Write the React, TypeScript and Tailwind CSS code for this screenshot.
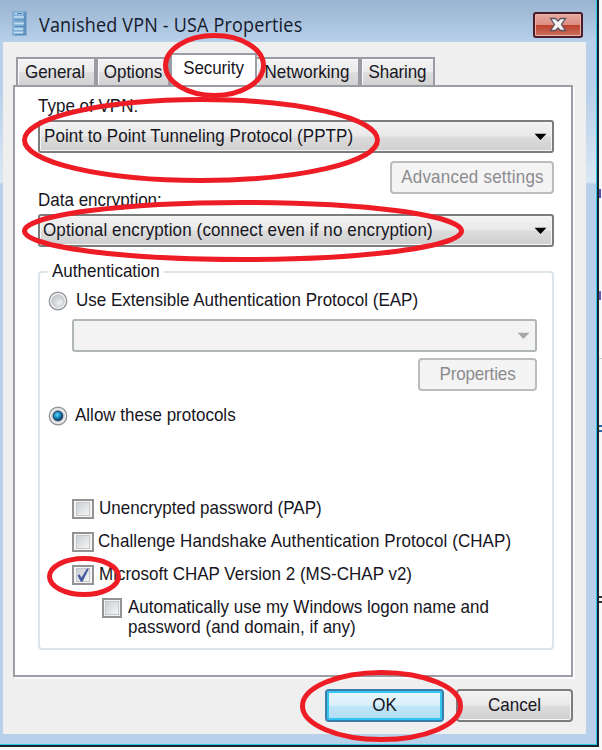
import React from 'react';

// Tall, narrow lettering used by every control in the dialog.
function Label({ children, className = '' }: { children: React.ReactNode; className?: string }) {
  return <span className={`inline-block origin-[50%_80%] scale-y-[1.08] whitespace-nowrap ${className}`}>{children}</span>;
}

function Combo({ text, className = '', disabled = false }: { text?: string; className?: string; disabled?: boolean }) {
  const tone = disabled
    ? 'border-[#b1b6b9] bg-[#f3f3f3]'
    : 'border-[#7c7c7c] bg-[linear-gradient(to_bottom,#f2f2f2_0%,#e9e9e9_48%,#dcdcdc_52%,#cfcfcf_100%)] shadow-[inset_0_0_0_1px_#f6f6f6]';
  return (
    <div className={`flex items-center justify-between rounded-[3px] border-2 pr-[5px] whitespace-nowrap ${tone} ${className}`}>
      <Label className="pt-px">{text}</Label>
      <svg width="13" height="8" viewBox="0 0 13 8" className={disabled ? 'fill-[#a4a7aa]' : 'fill-black'}>
        <path d="M0.5 0.7h12L6.5 7z" />
      </svg>
    </div>
  );
}

function Button({ text, className }: { text: string; className: string }) {
  return (
    <button className={`flex shrink-0 items-center justify-center rounded-[4px] border-2 pt-px whitespace-nowrap ${className}`}>
      <Label>{text}</Label>
    </button>
  );
}

const DISABLED = 'border-[#b9bdc0] bg-[#f4f4f4] text-[#8b8b8f]';

function Radio({ checked = false }: { checked?: boolean }) {
  return (
    <svg width="20" height="20" viewBox="0 0 20 20" className="shrink-0">
      <defs>
        <radialGradient id="well" cx=".62" cy=".65" r=".7">
          <stop offset="0" stopColor="#f0f0f0" />
          <stop offset="1" stopColor="#bcc2c8" />
        </radialGradient>
        <radialGradient id="dot" cx=".42" cy=".38" r=".6">
          <stop offset="0" stopColor="#63d0f5" />
          <stop offset=".55" stopColor="#1788bd" />
          <stop offset="1" stopColor="#0b2f55" />
        </radialGradient>
      </defs>
      <circle cx="10" cy="10" r="8.700" fill="#f6f6f6" stroke="#92969a" strokeWidth="1.400" />
      <circle cx="10" cy="10" r="6.300" fill="url(#well)" stroke="#c3c8cc" strokeWidth=".8" />
      {checked && <circle cx="10" cy="10" r="4.800" fill="url(#dot)" stroke="#173a5d" strokeWidth=".9" />}
    </svg>
  );
}

function Check({ checked = false, className = 'w-[22px]' }: { checked?: boolean; className?: string }) {
  return (
    <span className={`flex h-[20px] shrink-0 items-center justify-center border-2 border-[#939393] bg-[#f4f4f4] ${className}`}>
      <span className="flex size-[14px] items-center justify-center border border-[#c4c8cc] bg-linear-to-br from-[#cbd0d5] to-[#f5f5f5]">
        {checked && (
          <svg width="14" height="15" viewBox="0 0 14 15" className="shrink-0">
            <path d="M1.500 7.500l2-1.200 2 3.200L10.800 .8l2.200-.3L6.500 13.800H4.800z" fill="#465c9e" />
          </svg>
        )}
      </span>
    </span>
  );
}

function Tab({ text, className }: { text: string; className: string }) {
  return (
    <div className={`flex h-[28px] justify-center border-2 border-b-0 border-[#999ca3] bg-[linear-gradient(to_bottom,#f3f3f3_0%,#ebebeb_48%,#dedede_52%,#d2d2d2_100%)] pt-[4px] leading-[20px] whitespace-nowrap shadow-[inset_1px_1px_0_#fafafa] ${className}`}>
      <Label>{text}</Label>
    </div>
  );
}

function Annotations() {
  return (
    <svg width="602" height="750" className="pointer-events-none absolute inset-0 fill-none stroke-[#ee1c25] stroke-[5]">
      <ellipse cx="214.500" cy="65.500" rx="49" ry="30" />
      <ellipse cx="201" cy="140" rx="176.500" ry="40.500" />
      <ellipse cx="243" cy="231" rx="218.500" ry="28.500" />
      <ellipse cx="84" cy="576.500" rx="34.500" ry="18" />
      <ellipse cx="381.500" cy="706" rx="79" ry="33.500" />
    </svg>
  );
}

export default function App() {
  return (
    <div className="relative flex h-[750px] w-[602px] overflow-hidden bg-[#f8f8f8] font-['Liberation_Sans',Arial,sans-serif] text-[17px] leading-[20px] text-[#171522]">
      <div className="flex h-[747px] w-[599px] shrink-0 flex-col border-r-2 border-b-2 border-[#1c252b]">
        <div className="flex h-full flex-col border-r border-b border-[#2cc6e8] bg-[linear-gradient(to_bottom,#99b4d1_0px,#b8d0e9_42px,#b8d0e9_90px,#dbe7f4_182px,#b9d0ea_184px)] pr-[10px] pb-[10px] pl-[3px]">
          <header className="flex h-[42px] shrink-0 items-center pt-[7px] pl-[9px]">
            <svg width="15" height="25" viewBox="0 0 15 25" className="mb-[3px] shrink-0">
              <rect x=".5" y=".5" width="14" height="24" fill="#5e91bf" />
              <rect x=".5" y=".5" width="11" height="24" fill="#82b2d8" />
              <path d="M3 2.500h8M2 6h10M2 12.500h10M2 18h9M2 21.500h9" stroke="#c4def0" strokeWidth="1.500" />
              <path d="M5 2.500h5M2 9h10M3 15.500h9M3 23.500h9" stroke="#5585b1" strokeWidth="1" />
            </svg>
            <h1 className="ml-3 font-['Open_Sans','Noto_Sans',sans-serif] text-[18px] leading-[24px] tracking-[0.18px] whitespace-nowrap text-[#14192b]">
              <Label className="scale-y-[1.05]">Vanished VPN - USA Properties</Label>
            </h1>
            <button className="mr-[3px] ml-auto flex h-[26px] w-[50px] items-center justify-center rounded-[3px] border-2 border-[#4c1b29] bg-[linear-gradient(to_bottom,#e8aaa0_0%,#dc8d80_48%,#bd402b_50%,#cc705e_100%)] shadow-[inset_0_0_0_1px_#eab3a8]">
              <svg width="18" height="15" viewBox="0 0 18 15">
                <path d="M1.500 1.500h5L9 4l2.500-2.500h5L12.500 7.500l4 6h-5L9 11l-2.500 2.500h-5l4-6z" fill="#f3f3f3" stroke="#5c5560" strokeWidth="1.300" />
              </svg>
            </button>
          </header>

          <main className="flex flex-1 flex-col bg-[#efefef] pl-[10px]">
            <nav className="flex h-[43px] items-end pl-[3px]">
              <Tab text="General" className="w-[80px] pr-[2px] tracking-[-0.1px]" />
              <Tab text="Options" className="w-[74px] tracking-[0px]" />
              <div className="flex h-[32px] w-[87px] justify-center border-2 border-b-0 border-[#999ca3] bg-white pt-[4px] tracking-[-0.1px]">
                <Label>Security</Label>
              </div>
              <Tab text="Networking" className="w-[103px] border-l-0 pr-px" />
              <Tab text="Sharing" className="w-[75px] tracking-[-0.1px]" />
            </nav>

            <section className="flex h-[592px] w-[560px] flex-col border-2 border-[#9c9ca4] bg-white pt-[10px] pr-[17px] pl-[23px] shadow-[2px_2px_0_#fafafa]">
              <div className="h-[23px]">
                <Label>Type of VPN:</Label>
              </div>
              <Combo text="Point to Point Tunneling Protocol (PPTP)" className="h-[33px] pl-1 tracking-[0.05px]" />
              <Button text="Advanced settings" className={`mt-[8px] h-[33px] w-[164px] self-end pl-px tracking-[0.22px] ${DISABLED}`} />
              <div className="mt-[-3px] h-[23px]">
                <Label>Data encryption:</Label>
              </div>
              <Combo text="Optional encryption (connect even if no encryption)" className="h-[33px] pl-[3px] tracking-[0.12px]" />

              <fieldset className="mt-[15px] flex h-[388px] flex-col rounded-[4px] border-2 border-[#dce5ea] pr-[15px] pl-[8px]">
                <legend className="px-[4px]">
                  <Label>Authentication</Label>
                </legend>
                <div className="mt-[9px] flex h-[20px] shrink-0 items-center gap-[8px] whitespace-nowrap">
                  <Radio />
                  <Label>Use Extensible Authentication Protocol (EAP)</Label>
                </div>
                <Combo disabled className="mt-[8px] ml-[24px] h-[33px] shrink-0" />
                <Button text="Properties" className={`mt-[6px] h-[33px] w-[119px] self-end tracking-[-0.15px] ${DISABLED}`} />
                <div className="mt-[15px] flex h-[20px] shrink-0 items-center gap-[7px] whitespace-nowrap">
                  <Radio checked />
                  <Label>Allow these protocols</Label>
                </div>
                <div className="mt-[73px] ml-[24px] flex flex-col gap-[13px] whitespace-nowrap">
                  <div className="flex h-[20px] items-center gap-[5px]">
                    <Check />
                    <Label>Unencrypted password (PAP)</Label>
                  </div>
                  <div className="flex h-[20px] items-center gap-[4px]">
                    <Check />
                    <Label className="tracking-[0.08px]">Challenge Handshake Authentication Protocol (CHAP)</Label>
                  </div>
                  <div className="flex h-[20px] items-center gap-[5px]">
                    <Check checked />
                    <Label>Microsoft CHAP Version 2 (MS-CHAP v2)</Label>
                  </div>
                  <div className="ml-[30px] flex items-start gap-[6px]">
                    <Check className="w-[20px]" />
                    <div className="flex flex-col items-start">
                      <Label>Automatically use my Windows logon name and</Label>
                      <Label>password (and domain, if any)</Label>
                    </div>
                  </div>
                </div>
              </fieldset>
            </section>

            <footer className="mt-[12px] flex justify-end gap-[12px] pr-[13px]">
              <Button text="OK" className="h-[33px] w-[119px] border-[#397ea9] bg-[linear-gradient(to_bottom,#e9f6fd_0%,#daf0fb_48%,#c2e5f7_52%,#afdcf4_100%)] shadow-[inset_0_0_0_2px_#35c5f3]" />
              <Button text="Cancel" className="h-[33px] w-[117px] border-[#7c7c7c] bg-[linear-gradient(to_bottom,#f2f2f2_0%,#e9e9e9_48%,#dcdcdc_52%,#cfcfcf_100%)] shadow-[inset_0_0_0_1px_#f7f7f7]" />
            </footer>
          </main>
        </div>
      </div>
      <aside className="flex w-[3px] flex-col">
        <i className="mt-[189px] h-[9px] w-[2px] bg-[#5353b8]" />
        <i className="mt-[93px] h-[9px] w-[2px] bg-[#6c5bb8]" />
        <i className="mt-[58px] h-px w-[3px] bg-[#c8c8c8]" />
        <i className="mt-[66px] h-[2px] w-[3px] bg-[#2b65a5]" />
        <i className="mt-[3px] h-[2px] w-[3px] bg-[#2b65a5]" />
        <i className="mt-[164px] h-[2px] w-[3px] bg-[#333]" />
        <i className="mt-[3px] h-[2px] w-[3px] bg-[#333]" />
      </aside>
      <Annotations />
    </div>
  );
}
